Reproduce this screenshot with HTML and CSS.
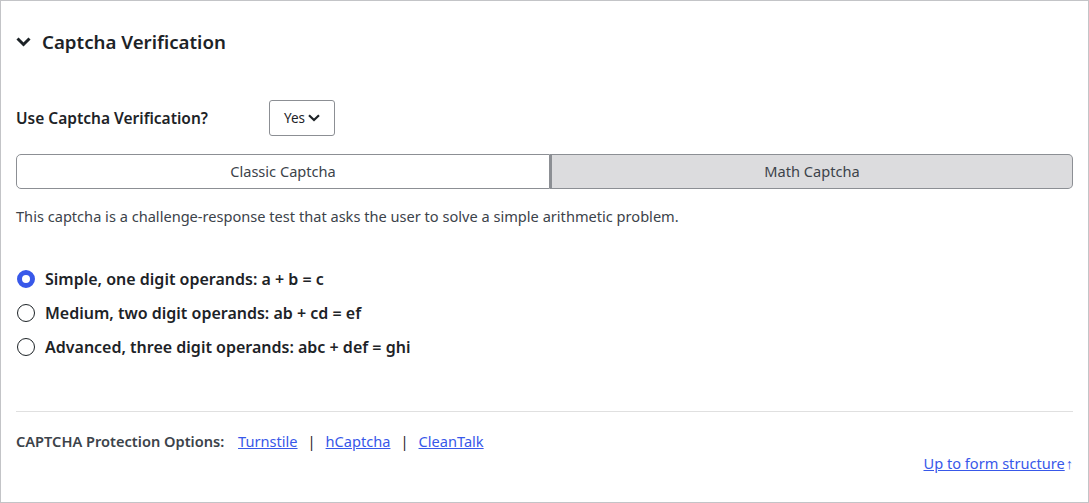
FILE: index.html
```html
<!DOCTYPE html>
<html lang="en">
<head>
    <meta charset="UTF-8">
    <meta name="viewport" content="width=device-width, initial-scale=1.0">
    <title>Captcha Verification</title>
    <link rel="stylesheet" href="styles.css">
</head>
<body>
    <div class="panel">
        <h2 class="panel-title">
            <svg class="toggle" width="15" height="10" viewBox="0 0 15 10"><path d="M1.5 1.5 L7.5 7.5 L13.5 1.5" fill="none" stroke="#1d2327" stroke-width="3"/></svg>
            Captcha Verification
        </h2>

        <div class="field-row">
            <label class="field-label">Use Captcha Verification?</label>
            <div class="select">
                Yes
                <svg width="12" height="8" viewBox="0 0 12 8"><path d="M1 1.2 L6 6 L11 1.2" fill="none" stroke="#1d2327" stroke-width="2.2"/></svg>
            </div>
        </div>

        <div class="tabs">
            <div class="tab">Classic Captcha</div>
            <div class="tab active">Math Captcha</div>
        </div>

        <p class="desc">This captcha is a challenge-response test that asks the user to solve a simple arithmetic problem.</p>

        <div class="options">
            <label class="option"><span class="radio checked"></span>Simple, one digit operands: a + b = c</label>
            <label class="option"><span class="radio"></span>Medium, two digit operands: ab + cd = ef</label>
            <label class="option"><span class="radio"></span>Advanced, three digit operands: abc + def = ghi</label>
        </div>

        <div class="footer">
            <div class="protection">
                <strong>CAPTCHA Protection Options:</strong>
                <a href="#">Turnstile</a><span class="sep">|</span><a href="#">hCaptcha</a><span class="sep">|</span><a href="#">CleanTalk</a>
            </div>
            <div class="up-link">
                <a href="#">Up to form structure</a><span class="arrow">↑</span>
            </div>
        </div>
    </div>
</body>
</html>
```

FILE: styles.css
```css
html, body {
    margin: 0;
    height: 100%;
}
body {
    font-family: 'Noto Sans', 'Open Sans', sans-serif;
    color: #1d2327;
    background: #fff;
}
.panel {
    box-sizing: border-box;
    height: 503px;
    border: 1px solid #c3c4c7;
    padding: 0 15px;
}
.panel-title {
    display: flex;
    align-items: center;
    margin: 0;
    padding-top: 26px;
    height: 28px;
    font-size: 18.7px;
    font-weight: 600;
    color: #1d2327;
}
.toggle {
    margin-right: 11px;
    margin-top: 2px;
}
.field-row {
    display: flex;
    align-items: center;
    margin-top: 45px;
}
.field-label {
    width: 253px;
    font-size: 15.5px;
    font-weight: 600;
}
.select {
    box-sizing: border-box;
    display: flex;
    align-items: center;
    gap: 3px;
    width: 66px;
    height: 36px;
    padding-left: 14px;
    border: 1px solid #8c8f94;
    border-radius: 3px;
    font-size: 13.5px;
}
.tabs {
    display: flex;
    margin-top: 18px;
}
.tab {
    flex: 1;
    height: 33px;
    line-height: 33px;
    text-align: center;
    font-size: 14.6px;
    color: #3c434a;
    border: 1px solid #8c8f94;
}
.tab:first-child {
    flex: 0 0 532px;
    border-radius: 5px 0 0 5px;
}
.tab:last-child {
    border-left: 0;
    border-radius: 0 5px 5px 0;
}
.tab.active {
    background: #dcdcde;
    border-left: 2px solid #8c8f94;
}
.desc {
    margin: 17px 0 0;
    line-height: 20px;
    font-size: 14.6px;
    color: #3c434a;
}
.options {
    margin-top: 42px;
    display: flex;
    flex-direction: column;
    gap: 12px;
}
.option {
    display: flex;
    align-items: center;
    height: 22px;
    font-size: 16px;
    font-weight: 600;
    color: #1d2327;
}
.radio {
    box-sizing: border-box;
    width: 18px;
    height: 18px;
    margin: 0 10px 0 1px;
    border: 1px solid #1d2327;
    border-radius: 50%;
}
.radio.checked {
    border: 5px solid #3858e9;
}
.footer {
    margin-top: 53px;
    border-top: 1px solid #e0e0e0;
}
.protection {
    margin-top: 19px;
    line-height: 20px;
    font-size: 14.6px;
    color: #3c434a;
}
.protection strong {
    font-weight: 600;
    margin-right: 10px;
}
.sep {
    margin: 0 10px;
    color: #1d2327;
}
a {
    color: #3858e9;
}
.up-link {
    margin-top: 2px;
    line-height: 20px;
    text-align: right;
    font-size: 14.6px;
    color: #3858e9;
}
.arrow {
    margin-left: 1px;
}
```
